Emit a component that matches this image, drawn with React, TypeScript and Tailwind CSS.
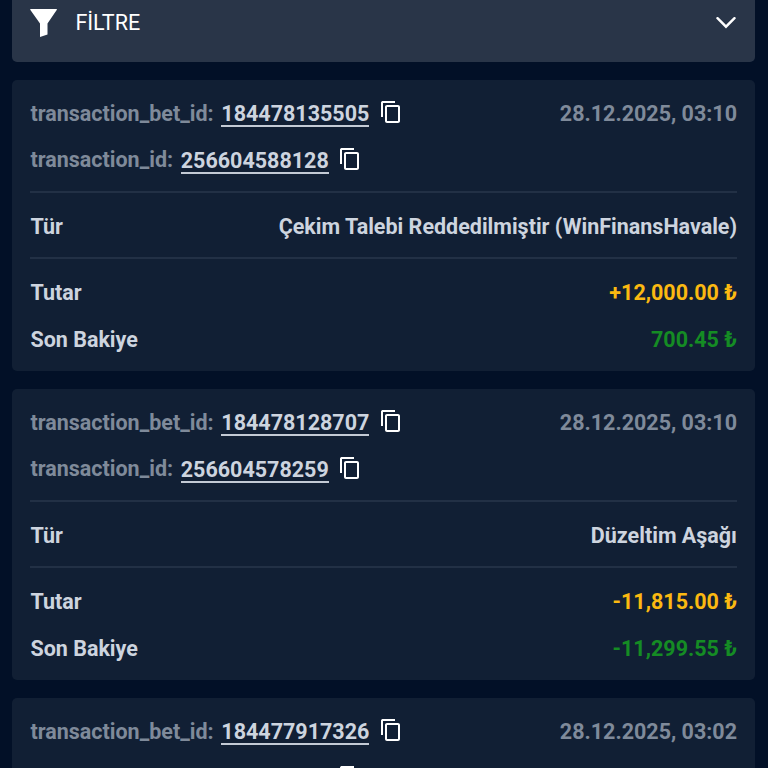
import React from "react";

function CopyIcon() {
  return (
    <svg width="24" height="24" viewBox="0 0 24 24" fill="#fff" className="mb-[3px] shrink-0">
      <path d="M16 1H4c-1.1 0-2 .5-2 1.6v14.4h2V3h12V1zm3 4H8c-1.1 0-2 .9-2 2v14c0 1.1.9 2 2 2h11c1.1 0 2-.9 2-2V7c0-1.1-.9-2-2-2zm0 16H8V7h11v14z" />
    </svg>
  );
}

function IdRow({ label, value, date }: { label: string; value: string; date?: string }) {
  return (
    <div className="flex h-[46.6px] items-center whitespace-nowrap">
      <span className="text-[#7f8a9a]">{label}:</span>
      <span className="ml-[7.7px] mr-[9.5px] border-b-2 border-[#c3cad5] pt-[2px] leading-[23px]">{value}</span>
      <CopyIcon />
      {date && <span className="ml-auto text-[#7f8a9a]">{date}</span>}
    </div>
  );
}

type Details = { id: string; type: string; amount: string; balance: string };
type Tx = { bet: string; date: string; details?: Details };

function CardDetails({ details }: { details: Details }) {
  return (
    <>
      <IdRow label="transaction_id" value={details.id} />
      <div className="mt-[7.3px] flex h-[68px] items-center justify-between border-y-2 border-[#223045] pt-[4px]">
        <span>Tür</span>
        <span>{details.type}</span>
      </div>
      <div className="mt-[11px] flex h-[46.6px] items-center justify-between">
        <span>Tutar</span>
        <span className="text-[#fbb911]">{details.amount} ₺</span>
      </div>
      <div className="flex h-[46.6px] items-center justify-between">
        <span>Son Bakiye</span>
        <span className="text-[#158c24]">{details.balance} ₺</span>
      </div>
    </>
  );
}

function Card({ tx }: { tx: Tx }) {
  return (
    <section className="h-[291px] shrink-0 rounded-[5px] bg-[#111f34] px-[18px] pt-[10.7px]">
      <IdRow label="transaction_bet_id" value={tx.bet} date={tx.date} />
      {tx.details ? (
        <CardDetails details={tx.details} />
      ) : (
        <div className="flex h-[46.6px] items-center pl-[307.5px]">
          <CopyIcon />
        </div>
      )}
    </section>
  );
}

const transactions: Tx[] = [
  {
    bet: "184478135505",
    date: "28.12.2025, 03:10",
    details: { id: "256604588128", type: "Çekim Talebi Reddedilmiştir (WinFinansHavale)", amount: "+12,000.00", balance: "700.45" },
  },
  {
    bet: "184478128707",
    date: "28.12.2025, 03:10",
    details: { id: "256604578259", type: "Düzeltim Aşağı", amount: "-11,815.00", balance: "-11,299.55" },
  },
  { bet: "184477917326", date: "28.12.2025, 03:02" },
];

export default function App() {
  return (
    <main className="flex h-[768px] flex-col overflow-hidden bg-[#021027] pl-[12.4px] pr-[13px] font-['Roboto',sans-serif] text-[21.5px] font-bold text-[#cdd4df]">
      <header className="flex h-[62px] shrink-0 items-start rounded-b-[5px] bg-[#293548] pl-[18px] pr-[19px] font-normal text-white">
        <svg width="28" height="30" viewBox="0 0 28 30" fill="#fff" className="mt-[8px]">
          <path d="M.8 1h25.6q1 0 .3 1L17.5 15.5v11L10 29V15.5L.4 2Q-.3 1 .8 1z" />
        </svg>
        <span className="ml-[17px] mt-[8px] leading-[30px]">FİLTRE</span>
        <svg width="20" height="12" viewBox="0 0 20 12" fill="none" stroke="#fff" strokeWidth="2.4" strokeLinecap="round" className="ml-auto mt-[17px]">
          <path d="M1.5 1.2L10 9.7l8.5-8.5" />
        </svg>
      </header>
      <div className="mt-[18px] flex flex-col gap-[18px]">
        {transactions.map((tx) => (
          <Card key={tx.bet} tx={tx} />
        ))}
      </div>
    </main>
  );
}
